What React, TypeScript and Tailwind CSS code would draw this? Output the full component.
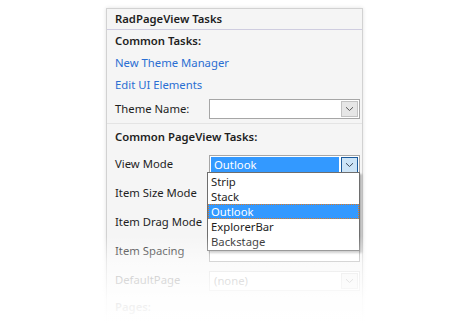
import React from 'react';

const FONT = "font-['Segoe_UI','Noto_Sans',sans-serif]";

const Chevron: React.FC<{ className?: string }> = ({ className }) => (
  <svg width="9" height="6" viewBox="0 0 9 6" className={className}>
    <path d="M1 1.2 L4.5 4.5 L8 1.2" fill="none" stroke="currentColor" strokeWidth="1" />
  </svg>
);

interface ComboProps {
  value?: string;
  active?: boolean;
  disabled?: boolean;
  noButton?: boolean;
}

const Combo: React.FC<ComboProps> = ({ value, active, disabled, noButton }) => (
  <div
    className={
      'w-[151px] h-[20px] border bg-white flex items-stretch p-px gap-[2px] ' +
      (disabled ? 'border-[#d4d4d4]' : 'border-[#a6a6a6]')
    }
  >
    <div
      className={
        'flex-1 flex items-center pl-[3px] text-[11.3px] leading-none ' +
        (active ? 'bg-[#3399ff] text-white' : disabled ? 'text-[#8a8a8a]' : 'text-[#1e1e1e]')
      }
    >
      {value}
    </div>
    {!noButton && (
      <div
        className={
          'w-[17px] flex items-center justify-center border ' +
          (active
            ? 'bg-[#cce4f7] border-[#1a5a9c] text-[#3d4a5a]'
            : disabled
            ? 'bg-[#f2f2f2] border-[#d6d6d6] text-[#9a9a9a]'
            : 'bg-[#e6e6e6] border-[#c2c2c2] text-[#5a5a5a]')
        }
      >
        <Chevron />
      </div>
    )}
  </div>
);

const PropRow: React.FC<{ label: string; children?: React.ReactNode; muted?: boolean }> = ({ label, children, muted }) => (
  <div className="h-[29px] flex items-center">
    <div className={'w-[94px] text-[11.3px] ' + (muted ? 'text-[#6d6d6d]' : 'text-[#1e1e1e]')}>{label}</div>
    {children}
  </div>
);

export default function App() {
  const items = ['Strip', 'Stack', 'Outlook', 'ExplorerBar', 'Backstage'];

  return (
    <div className={`relative w-[470px] h-[323px] overflow-hidden bg-white ${FONT}`}>
      {/* Smart tag panel */}
      <div className="ml-[106px] mt-[8px] w-[257px] border border-[#d2d2d2] bg-[#f5f5f5] shadow-[0_0_4px_rgba(0,0,0,0.12)]">
        <div className="h-[21px] pl-[8px] flex items-center border-b border-[#cfcde0] text-[11.3px] font-semibold text-[#1e1e1e]">
          RadPageView Tasks
        </div>

        <div className="pl-[8px] pr-[2px]">
          <div className="h-[23px] flex items-center text-[11.3px] font-semibold text-[#1e1e1e]">Common Tasks:</div>
          <div className="h-[21px] flex items-center text-[11.3px] text-[#2a6fd3]">New Theme Manager</div>
          <div className="h-[22px] flex items-center text-[11.3px] text-[#2a6fd3]">Edit UI Elements</div>
          <div className="h-[27px] flex items-center pb-px">
            <div className="w-[94px] text-[11.3px] text-[#1e1e1e]">Theme Name:</div>
            <Combo />
          </div>
        </div>

        <div className="border-t border-[#e4e4e4] pl-[8px] pr-[2px]">
          <div className="h-[26px] pt-px flex items-center text-[11.3px] font-semibold text-[#1e1e1e]">Common PageView Tasks:</div>
          <PropRow label="View Mode">
            <Combo value="Outlook" active />
          </PropRow>
          <PropRow label="Item Size Mode">
            <Combo />
          </PropRow>
          <PropRow label="Item Drag Mode">
            <Combo />
          </PropRow>
          <PropRow label="Item Spacing">
            <Combo noButton />
          </PropRow>
          <PropRow label="DefaultPage" muted>
            <Combo value="(none)" disabled />
          </PropRow>
          <div className="h-[24px] flex items-center text-[11.3px] font-semibold text-[#1e1e1e]">Pages:</div>
          <div className="h-[40px]" />
        </div>
      </div>

      {/* Open drop-down list */}
      <div className="absolute left-[207px] top-[172px] w-[153px] border border-[#6e6e6e] bg-white shadow-[2px_2px_2px_rgba(0,0,0,0.28)] py-px">
        {items.map((it) => (
          <div
            key={it}
            className={
              'h-[15px] flex items-center pl-[3px] text-[11.3px] leading-none ' +
              (it === 'Outlook'
                ? 'bg-[#3399ff] text-white outline outline-1 outline-dotted outline-[#e07a20] -outline-offset-1'
                : 'text-[#1e1e1e]')
            }
          >
            {it}
          </div>
        ))}
      </div>

      {/* Fade-out toward the bottom */}
      <div className="absolute left-0 right-0 top-[236px] bottom-0 bg-[linear-gradient(to_bottom,rgba(255,255,255,0)_0%,rgba(255,255,255,0.55)_30%,rgba(255,255,255,0.9)_72%,#ffffff_100%)] pointer-events-none" />
    </div>
  );
}
